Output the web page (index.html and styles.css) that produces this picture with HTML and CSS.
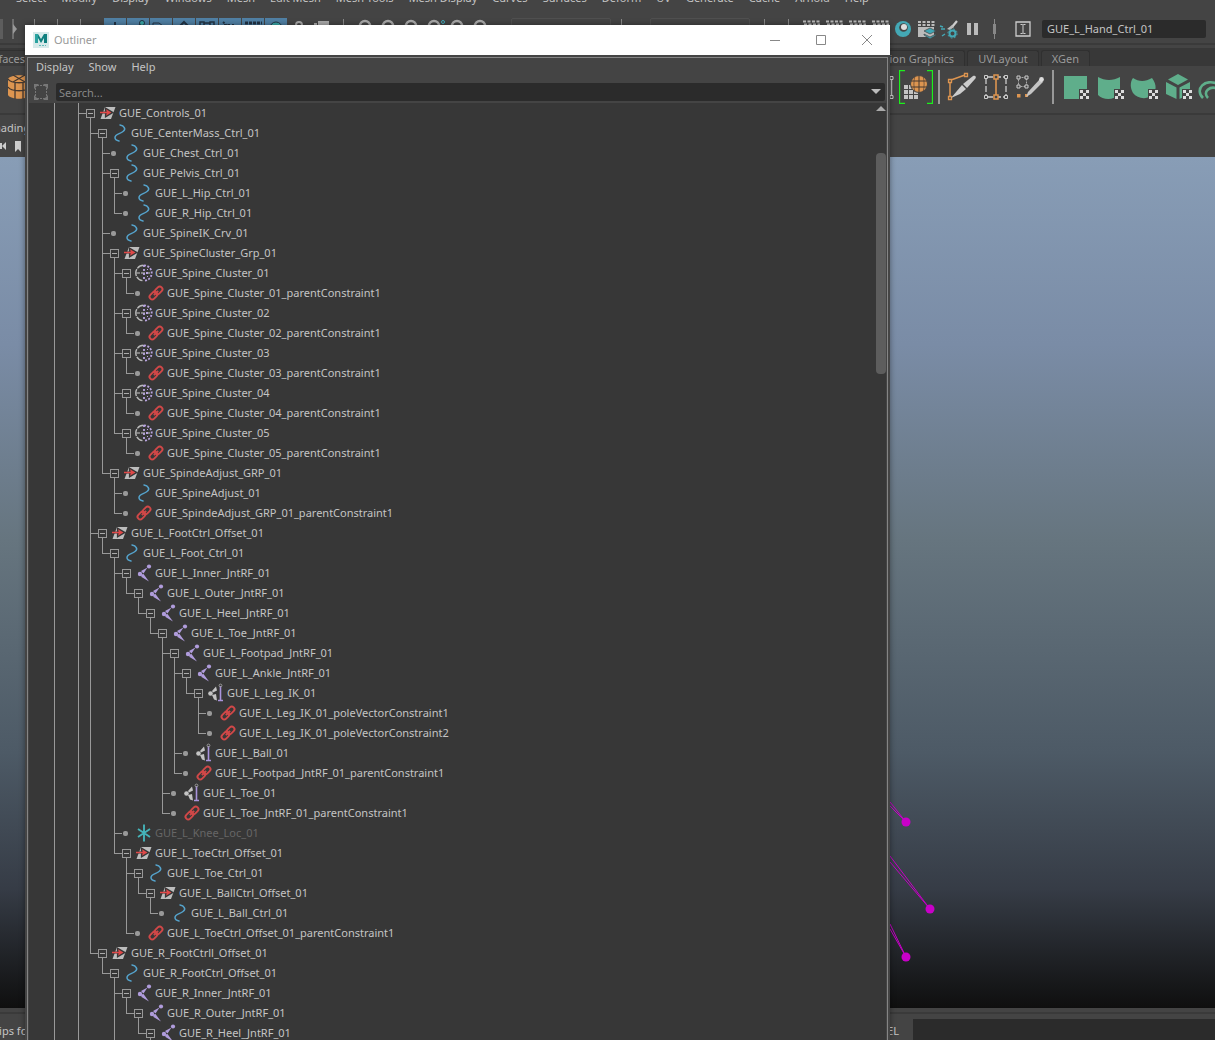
FILE: index.html
```html
<!DOCTYPE html>
<html lang="en">
<head>
<meta charset="utf-8">
<title>Outliner</title>
<link rel="stylesheet" href="styles.css">
</head>
<body>
<svg class="sprite" aria-hidden="true">
  <symbol id="group" viewBox="0 0 24 20"><path d="M10 4h10.500L16 16H5.500z" fill="#bdbdbd"/><path d="M4.500 9.500H11V6l6 3.500-6 3.500V9.500" fill="#e04848" stroke="#373737" stroke-width="2.200"/><path d="M5 9.500h8" stroke="#e04848" stroke-width="1.500"/><path d="M11 6.200l5.500 3.300-5.500 3.300 1-3.300z" fill="#e04848"/></symbol>
  <symbol id="curve" viewBox="0 0 24 20"><path d="M13 2c4 .8 6.500 4 3 6.500C13 11 8 11 8 14.500c0 2 1.800 3 4 3.500" fill="none" stroke="#55a3cc" stroke-width="1.500" stroke-linecap="round"/></symbol>
  <symbol id="cluster" viewBox="-1 0 24 20"><path d="M11.500 2.300a7.700 7.700 0 0 0 0 15.400" fill="none" stroke="#b8b8b8" stroke-width="1.400" stroke-dasharray="7 1"/><path d="M12 2.300a7.700 7.700 0 0 1 0 15.400" fill="none" stroke="#b9a4e0" stroke-width="1.800" stroke-dasharray="2 1.500"/><path d="M4 10h15" stroke="#999" stroke-width="1.500" stroke-dasharray="4 1"/><path d="M12 2v16" stroke="#b9a4e0" stroke-width="1.800" stroke-dasharray="2 2"/><path d="M14 9h2v2h-2zM15 6h1v1h-1zM15 13h1v1h-1z" fill="#b9a4e0"/></symbol>
  <symbol id="link" viewBox="-1 0 24 20"><g transform="rotate(-45 12 10)" fill="none" stroke="#d04848" stroke-width="1.900"><rect x="4" y="7.300" width="8.600" height="5.400" rx="2.700"/><rect x="11.400" y="7.300" width="8.600" height="5.400" rx="2.700"/><path d="M9 10h6"/></g></symbol>
  <symbol id="joint" viewBox="-1 0 24 20"><g fill="#b09cdc"><circle cx="17" cy="3.500" r="2.100"/><circle cx="8" cy="11" r="2.200"/><path d="M15.500 4.500L9 8l2.500 2.500zM9 11.500l2.500-.5 5.500 7.500L9.500 14z"/></g></symbol>
  <symbol id="ik" viewBox="0 0 24 20"><g fill="#c4c4c4"><circle cx="7.500" cy="10.500" r="2.300"/><path d="M13 3.500l1 4-4 2-1-1.500zM9 12l4-1 1 6.500-3-1z"/></g><path d="M17.500 3v14M15 17.500h5" stroke="#a994dc" stroke-width="1.600"/><circle cx="17.500" cy="2.500" r="1.400" fill="none" stroke="#999"/></symbol>
  <symbol id="locator" viewBox="-1 0 24 20"><path d="M12 1.500v17M6 6l12 8M18 6L6 14" stroke="#45b3b8" stroke-width="1.900"/></symbol>
  <symbol id="clapper" viewBox="0 0 22 22"><path d="M3 3.500h17M4 6.500h16" stroke="#bbb" stroke-width="2" stroke-dasharray="3 1.500"/><path d="M4 9h16v10H4z" fill="#bbb"/></symbol>
  <symbol id="magnet" viewBox="0 0 22 22"><path d="M6 14V8a5 5 0 0 1 10 0v6" fill="none" stroke="#aaa" stroke-width="2.500"/></symbol>
  <symbol id="checker" viewBox="0 0 10 10"><path d="M0 0h10v10H0z" fill="#444"/><path d="M1 1h3v3H1zM7 1h3v3H7zM4 4h3v3H4zM1 7h3v3H1zM7 7h3v3H7z" fill="#ddd"/></symbol>
</svg>

<div class="app">
  <nav class="main-menu" aria-label="Main menu">
    <button>Select</button><button>Modify</button><button>Display</button><button>Windows</button><button>Mesh</button><button>Edit Mesh</button><button>Mesh Tools</button><button>Mesh Display</button><button>Curves</button><button>Surfaces</button><button>Deform</button><button>UV</button><button>Generate</button><button>Cache</button><button>Arnold</button><button>Help</button>
  </nav>

  <div class="status-line">
    <span class="combo-end"></span>
    <svg class="handle" viewBox="0 0 6 20"><path d="M1 0v20" stroke="#999"/><path d="M1 5l4 5-4 5z" fill="#999"/></svg>
    <div class="dividers"><i></i><i></i><i></i></div>
    <div class="tools">
      <svg class="tool on" viewBox="0 0 22 22"><path d="M11 4v14" stroke="#234" stroke-width="2"/></svg>
      <svg class="tool on" viewBox="0 0 22 22"><path d="M4 16l10-10" stroke="#234" stroke-width="2"/><circle cx="15" cy="5" r="2.500" fill="#3aa8a8" stroke="#234"/></svg>
      <svg class="tool on" viewBox="0 0 22 22"><path d="M3 5h6l8 6H3z" fill="none" stroke="#234"/></svg>
      <svg class="tool on" viewBox="0 0 22 22"><path d="M11 4l7 7-7 7-7-7z" fill="none" stroke="#234" stroke-width="2"/></svg>
      <svg class="tool on" viewBox="0 0 22 22"><path d="M4 4h4v4H4zM14 4h4v4h-4zM8 5h6" fill="none" stroke="#234" stroke-width="1.500"/></svg>
      <svg class="tool on" viewBox="0 0 22 22"><path d="M4 4l12 10M5 7h12" stroke="#234" stroke-width="2" stroke-dasharray="2 2"/></svg>
      <svg class="tool on" viewBox="0 0 22 22"><path d="M3 5h17" stroke="#234" stroke-width="3" stroke-dasharray="3 1"/></svg>
      <svg class="tool on" viewBox="0 0 22 22"><circle cx="11" cy="10" r="6" fill="#3aa8a8" stroke="#234"/></svg>
      <svg class="tool" viewBox="0 0 22 22"><circle cx="11" cy="7" r="3" fill="none" stroke="#aaa" stroke-width="2"/></svg>
      <svg class="tool" viewBox="0 0 22 22"><path d="M7 3h11v7H7zM3 5h3v2H3z" fill="#aaa"/></svg>
    </div>
    <i class="bar"></i>
    <div class="tools snaps">
      <svg class="tool"><use href="#magnet"/></svg><svg class="tool"><use href="#magnet"/></svg><svg class="tool"><use href="#magnet"/></svg>
      <svg class="tool" viewBox="0 0 22 22"><use href="#magnet"/><circle cx="20" cy="4" r="1.500" fill="none" stroke="#4ab"/></svg>
      <svg class="tool"><use href="#magnet"/></svg><svg class="tool"><use href="#magnet"/></svg>
    </div>
    <span class="slot"></span>
    <i class="bar mid"></i>
    <span class="slot second"></span>
    <div class="render">
      <i class="bar"></i><i class="bar"></i>
      <div class="tools">
        <svg class="tool"><use href="#clapper"/></svg><svg class="tool"><use href="#clapper"/></svg><svg class="tool"><use href="#clapper"/></svg><svg class="tool"><use href="#clapper"/></svg>
        <svg class="tool" viewBox="0 0 22 22"><circle cx="11" cy="11" r="8" fill="#44a8b5"/><circle cx="11.500" cy="9.500" r="4.300" fill="#444"/><circle cx="12" cy="9" r="3" fill="#ddd"/></svg>
        <svg class="tool" viewBox="0 0 22 22"><path d="M3 4h17M3 7h17" stroke="#bbb" stroke-width="2" stroke-dasharray="3 1.500"/><path d="M3 9h16v10H3z" fill="#bbb"/><path d="M9 13l6-3 6 3-6 3zM9 16l6 3 6-3v1l-6 4-6-4z" fill="#3fa6b5" stroke="#444" stroke-width=".7"/></svg>
        <svg class="tool" viewBox="0 0 22 22"><path d="M19 3l-5 6" stroke="#ccc" stroke-width="2.200"/><path d="M14 7l2 2-4 3-3-1z" fill="#bbb"/><path d="M3 11h4M4 18l3-2M2 8l3 1" stroke="#44a8b5" stroke-width="1.500"/><circle cx="14.500" cy="15.500" r="3" fill="none" stroke="#44a8b5" stroke-width="2"/><circle cx="14.500" cy="15.500" r="4.600" fill="none" stroke="#44a8b5" stroke-dasharray="1.800 1.800"/></svg>
        <svg class="tool" viewBox="0 0 22 22"><path d="M6 5h4v12H6zM13 5h4v12h-4z" fill="#bbb"/></svg>
        <svg class="tool" viewBox="0 0 22 22"><path d="M10.500 1v20" stroke="#888"/><path d="M9 6h3v10H9z" fill="#888"/></svg>
      </div>
      <svg class="rename" viewBox="0 0 16 16"><path d="M1 1h14v14H1z" fill="none" stroke="#ccc" stroke-width="1.300"/><path d="M5.500 3.500h2l.5.5.5-.5h2M8 4v8M5.500 12.500h2l.5-.5.5.5h2" fill="none" stroke="#ccc"/></svg>
      <input class="name-field" type="text" aria-label="Object name" value="GUE_L_Hand_Ctrl_01">
    </div>
  </div>

  <div class="shelf-tabs">
    <button>Surfaces</button>
    <div class="tab-group"><button>Motion Graphics</button><button>UVLayout</button><button>XGen</button></div>
  </div>
  <div class="shelf">
    <svg class="shelf-tool" viewBox="0 0 34 34"><path d="M8 9c3-5 19-5 22 0v16c-3 5-19 5-22 0z" fill="#dd9550"/><path d="M8 9c3 5 19 5 22 0M8 17c3 5 19 5 22 0M15 12v17M23 12v17M13 5l12 7M25 5l-12 7" fill="none" stroke="#443830" stroke-width="1.300"/></svg>
    <div class="shelf-right">
      <svg class="shelf-tool" viewBox="0 0 34 34"><path d="M26.500 8v18" stroke="#bbb" stroke-width="1.500"/><path d="M25 6.500h3v3h-3zM25 25.500h3v3h-3z" fill="#444" stroke="#ccc"/></svg>
      <svg class="shelf-tool" viewBox="0 0 34 34"><path d="M6 .5H.5v33H6M28 .5h5.500v33H28" fill="none" stroke="#1cf01c" stroke-width="1.300"/><path d="M5 15h4v4H5zM10 15h4v4h-4zM5 20h4v4H5zM10 20h4v4h-4zM15 20h4v4h-4zM5 25h4v4H5zM10 25h4v4h-4zM15 25h4v4h-4z" fill="#c4c4c4"/><circle cx="20" cy="14" r="8.500" fill="#dd9550" stroke="#444"/><path d="M12 11h16M12 17h16M20 6v16" fill="none" stroke="#443830"/><path d="M16 6c-1.500 5-1.500 11 0 16M24 6c1.500 5 1.500 11 0 16" fill="none" stroke="#443830" stroke-width=".6"/></svg>
      <i class="shelf-bar"></i>
      <svg class="shelf-tool" viewBox="0 0 34 34"><path d="M5 12v14M6 10l14-5" stroke="#dd9550" stroke-width="1.500"/><path d="M3.500 9.500h3v3h-3zM19.500 3.500h3v3h-3zM3.500 26.500h3v3h-3z" fill="#444" stroke="#dd9550" stroke-width="1.300"/><path d="M28 6c2-1 4 1 2 3l-8 9-4-4z" fill="#ccc"/><path d="M17 15l4 4-6 5-9 4z" fill="#ccc"/></svg>
      <svg class="shelf-tool" viewBox="0 0 34 34"><path d="M7 8v18M27 8v18M8 7h18M8 27h18" stroke="#ccc" stroke-width="1.300" stroke-dasharray="6 2"/><path d="M17 8v18" stroke="#dd9550" stroke-width="1.600"/><path d="M5.500 5.500h3v3h-3zM25.500 5.500h3v3h-3zM5.500 25.500h3v3h-3zM25.500 25.500h3v3h-3z" fill="#444" stroke="#ccc"/><path d="M15 5h4v4h-4zM15 25h4v4h-4z" fill="#444" stroke="#dd9550" stroke-width="1.500"/></svg>
      <svg class="shelf-tool" viewBox="0 0 34 34"><path d="M5.500 7.500h8v9h-8z" fill="none" stroke="#aaa" stroke-dasharray="2 1"/><path d="M4 6h3v3H4zM12 6h3v3h-3zM4 15h3v3H4zM12 15h3v3h-3z" fill="#444" stroke="#ccc"/><path d="M4 24h3.500v3.500H4zM12 24h3v3h-3z" fill="#dd9550"/><path d="M27 9l3 3-12 12-5 3 2-5z" fill="#c4c4c4"/><circle cx="28.500" cy="9.500" r="2.400" fill="#ddd"/></svg>
      <i class="shelf-bar"></i>
      <svg class="shelf-tool" viewBox="0 0 34 34"><path d="M5 6h23v23H5z" fill="#5fae8b"/><use href="#checker" x="20" y="19" width="10" height="10"/></svg>
      <svg class="shelf-tool" viewBox="0 0 34 34"><path d="M5 7c7 4 15 4 22 0v17c-7 7-17 6-22 1z" fill="#5fae8b"/><use href="#checker" x="21" y="19" width="10" height="10"/></svg>
      <svg class="shelf-tool" viewBox="0 0 34 34"><path d="M6 8c6 4 12 4 19 0 5 7 5 13-1 18-6 4-14 2-18-3-3-5-3-11 0-15z" fill="#5fae8b"/><use href="#checker" x="21" y="19" width="10" height="10"/></svg>
      <svg class="shelf-tool" viewBox="0 0 34 34"><path d="M17 4l10 5.500-10 5.500L7 9.500zM5 12l10.500 5.500V29L5 24zM29 12l-10.500 5.500V29L29 24z" fill="#5fae8b"/><use href="#checker" x="21" y="19" width="10" height="10"/></svg>
      <svg class="shelf-tool" viewBox="0 0 34 34"><path d="M8 28c-9-9 2-20 15-14M13 28c-6-6 2-13 10-9" fill="none" stroke="#5fae8b" stroke-width="2.600"/></svg>
    </div>
  </div>

  <div class="panel-bar">
    <button class="panel-menu">Shading</button>
    <svg class="panel-icons" viewBox="0 0 24 14"><path d="M-1 4h3v6h-3zM2 7l4-4v8z" fill="#ccc"/><path d="M15 2h6v11l-3-3-3 3z" fill="#ccc"/></svg>
  </div>

  <main class="viewport">
    <svg class="joints" viewBox="0 0 325 240">
      <g fill="none" stroke="#c400c4"><path d="M0 34l16 20M0 38l16 16M0 88l40 53M0 94l40 47M0 156l16 33M0 161l16 28"/></g>
      <g fill="#c800c8"><circle cx="16" cy="54" r="4.500"/><circle cx="40" cy="141" r="4.500"/><circle cx="16" cy="189" r="4.500"/></g>
    </svg>
  </main>

  <footer class="command-line">
    <span>Tips for</span>
    <label for="mel">MEL</label>
    <input id="mel" type="text">
  </footer>
</div>

<section class="outliner" aria-label="Outliner">
  <header class="title-bar">
    <svg class="logo" viewBox="0 0 16 16"><path d="M0 0h16v16H0z" fill="#d7eaea"/><path d="M2 2h3l3 5 3-5h3v9h-3V6l-3 5-3-5v5H2z" fill="#10807f"/><path d="M2 2h3v9H2z" fill="#2aa3a0"/><path d="M6 13.500h7" stroke="#6bb" stroke-dasharray="2 1"/></svg>
    <h1>Outliner</h1>
    <div class="window-buttons">
      <button aria-label="Minimize"><svg viewBox="0 0 12 12"><path d="M1 6.500h10"/></svg></button>
      <button aria-label="Maximize"><svg viewBox="0 0 12 12"><path d="M1.500 1.500h9v9h-9z"/></svg></button>
      <button aria-label="Close"><svg viewBox="0 0 12 12"><path d="M1 1l10 10M11 1L1 11"/></svg></button>
    </div>
  </header>
  <div class="frame">
    <nav class="menu" aria-label="Outliner menu"><button>Display</button><button>Show</button><button>Help</button></nav>
    <div class="search">
      <svg class="fit" viewBox="0 0 16 16"><g fill="#777"><path d="M1 0h5L1 5zM15 0v5l-5-5zM1 16v-5l5 5zM15 16h-5l5-5z"/></g><path d="M2.500 4v8M13.500 4v8M4 1.500h8M4 14.500h8" stroke="#777" stroke-dasharray="2 1"/></svg>
      <div class="search-box">
        <input type="search" placeholder="Search..." aria-label="Search">
        <button aria-label="Search options"><svg viewBox="0 0 10 6"><path d="M0 0h10L5 5z" fill="#bbb"/></svg></button>
      </div>
    </div>
    <div class="body">
      <ul class="tree root"><li class="more"><ul class="tree deep"><li class="more">
        <div class="row"><button class="toggle" aria-label="Collapse"></button><svg><use href="#group"/></svg>GUE_Controls_01</div>
        <ul class="tree">
          <li><div class="row"><button class="toggle" aria-label="Collapse"></button><svg><use href="#curve"/></svg>GUE_CenterMass_Ctrl_01</div>
            <ul class="tree">
              <li><div class="row"><i class="dot"></i><svg><use href="#curve"/></svg>GUE_Chest_Ctrl_01</div></li>
              <li><div class="row"><button class="toggle" aria-label="Collapse"></button><svg><use href="#curve"/></svg>GUE_Pelvis_Ctrl_01</div>
                <ul class="tree">
                  <li><div class="row"><i class="dot"></i><svg><use href="#curve"/></svg>GUE_L_Hip_Ctrl_01</div></li>
                  <li><div class="row"><i class="dot"></i><svg><use href="#curve"/></svg>GUE_R_Hip_Ctrl_01</div></li>
                </ul>
              </li>
              <li><div class="row"><i class="dot"></i><svg><use href="#curve"/></svg>GUE_SpineIK_Crv_01</div></li>
              <li><div class="row"><button class="toggle" aria-label="Collapse"></button><svg><use href="#group"/></svg>GUE_SpineCluster_Grp_01</div>
                <ul class="tree">
                  <li><div class="row"><button class="toggle" aria-label="Collapse"></button><svg><use href="#cluster"/></svg>GUE_Spine_Cluster_01</div>
                    <ul class="tree"><li><div class="row"><i class="dot"></i><svg><use href="#link"/></svg>GUE_Spine_Cluster_01_parentConstraint1</div></li></ul></li>
                  <li><div class="row"><button class="toggle" aria-label="Collapse"></button><svg><use href="#cluster"/></svg>GUE_Spine_Cluster_02</div>
                    <ul class="tree"><li><div class="row"><i class="dot"></i><svg><use href="#link"/></svg>GUE_Spine_Cluster_02_parentConstraint1</div></li></ul></li>
                  <li><div class="row"><button class="toggle" aria-label="Collapse"></button><svg><use href="#cluster"/></svg>GUE_Spine_Cluster_03</div>
                    <ul class="tree"><li><div class="row"><i class="dot"></i><svg><use href="#link"/></svg>GUE_Spine_Cluster_03_parentConstraint1</div></li></ul></li>
                  <li><div class="row"><button class="toggle" aria-label="Collapse"></button><svg><use href="#cluster"/></svg>GUE_Spine_Cluster_04</div>
                    <ul class="tree"><li><div class="row"><i class="dot"></i><svg><use href="#link"/></svg>GUE_Spine_Cluster_04_parentConstraint1</div></li></ul></li>
                  <li><div class="row"><button class="toggle" aria-label="Collapse"></button><svg><use href="#cluster"/></svg>GUE_Spine_Cluster_05</div>
                    <ul class="tree"><li><div class="row"><i class="dot"></i><svg><use href="#link"/></svg>GUE_Spine_Cluster_05_parentConstraint1</div></li></ul></li>
                </ul>
              </li>
              <li><div class="row"><button class="toggle" aria-label="Collapse"></button><svg><use href="#group"/></svg>GUE_SpindeAdjust_GRP_01</div>
                <ul class="tree">
                  <li><div class="row"><i class="dot"></i><svg><use href="#curve"/></svg>GUE_SpineAdjust_01</div></li>
                  <li><div class="row"><i class="dot"></i><svg><use href="#link"/></svg>GUE_SpindeAdjust_GRP_01_parentConstraint1</div></li>
                </ul>
              </li>
            </ul>
          </li>
          <li><div class="row"><button class="toggle" aria-label="Collapse"></button><svg><use href="#group"/></svg>GUE_L_FootCtrl_Offset_01</div>
            <ul class="tree">
              <li><div class="row"><button class="toggle" aria-label="Collapse"></button><svg><use href="#curve"/></svg>GUE_L_Foot_Ctrl_01</div>
                <ul class="tree">
                  <li><div class="row"><button class="toggle" aria-label="Collapse"></button><svg><use href="#joint"/></svg>GUE_L_Inner_JntRF_01</div>
                    <ul class="tree"><li><div class="row"><button class="toggle" aria-label="Collapse"></button><svg><use href="#joint"/></svg>GUE_L_Outer_JntRF_01</div>
                      <ul class="tree"><li><div class="row"><button class="toggle" aria-label="Collapse"></button><svg><use href="#joint"/></svg>GUE_L_Heel_JntRF_01</div>
                        <ul class="tree"><li><div class="row"><button class="toggle" aria-label="Collapse"></button><svg><use href="#joint"/></svg>GUE_L_Toe_JntRF_01</div>
                          <ul class="tree">
                            <li><div class="row"><button class="toggle" aria-label="Collapse"></button><svg><use href="#joint"/></svg>GUE_L_Footpad_JntRF_01</div>
                              <ul class="tree">
                                <li><div class="row"><button class="toggle" aria-label="Collapse"></button><svg><use href="#joint"/></svg>GUE_L_Ankle_JntRF_01</div>
                                  <ul class="tree"><li><div class="row"><button class="toggle" aria-label="Collapse"></button><svg><use href="#ik"/></svg>GUE_L_Leg_IK_01</div>
                                    <ul class="tree">
                                      <li><div class="row"><i class="dot"></i><svg><use href="#link"/></svg>GUE_L_Leg_IK_01_poleVectorConstraint1</div></li>
                                      <li><div class="row"><i class="dot"></i><svg><use href="#link"/></svg>GUE_L_Leg_IK_01_poleVectorConstraint2</div></li>
                                    </ul></li></ul>
                                </li>
                                <li><div class="row"><i class="dot"></i><svg><use href="#ik"/></svg>GUE_L_Ball_01</div></li>
                                <li><div class="row"><i class="dot"></i><svg><use href="#link"/></svg>GUE_L_Footpad_JntRF_01_parentConstraint1</div></li>
                              </ul>
                            </li>
                            <li><div class="row"><i class="dot"></i><svg><use href="#ik"/></svg>GUE_L_Toe_01</div></li>
                            <li><div class="row"><i class="dot"></i><svg><use href="#link"/></svg>GUE_L_Toe_JntRF_01_parentConstraint1</div></li>
                          </ul></li></ul></li></ul></li></ul>
                  </li>
                  <li><div class="row dim"><i class="dot"></i><svg><use href="#locator"/></svg>GUE_L_Knee_Loc_01</div></li>
                  <li><div class="row"><button class="toggle" aria-label="Collapse"></button><svg><use href="#group"/></svg>GUE_L_ToeCtrl_Offset_01</div>
                    <ul class="tree">
                      <li><div class="row"><button class="toggle" aria-label="Collapse"></button><svg><use href="#curve"/></svg>GUE_L_Toe_Ctrl_01</div>
                        <ul class="tree"><li><div class="row"><button class="toggle" aria-label="Collapse"></button><svg><use href="#group"/></svg>GUE_L_BallCtrl_Offset_01</div>
                          <ul class="tree"><li><div class="row"><i class="dot"></i><svg><use href="#curve"/></svg>GUE_L_Ball_Ctrl_01</div></li></ul></li></ul>
                      </li>
                      <li><div class="row"><i class="dot"></i><svg><use href="#link"/></svg>GUE_L_ToeCtrl_Offset_01_parentConstraint1</div></li>
                    </ul>
                  </li>
                </ul>
              </li>
            </ul>
          </li>
          <li><div class="row"><button class="toggle" aria-label="Collapse"></button><svg><use href="#group"/></svg>GUE_R_FootCtrll_Offset_01</div>
            <ul class="tree"><li><div class="row"><button class="toggle" aria-label="Collapse"></button><svg><use href="#curve"/></svg>GUE_R_FootCtrl_Offset_01</div>
              <ul class="tree"><li class="more"><div class="row"><button class="toggle" aria-label="Collapse"></button><svg><use href="#joint"/></svg>GUE_R_Inner_JntRF_01</div>
                <ul class="tree"><li><div class="row"><button class="toggle" aria-label="Collapse"></button><svg><use href="#joint"/></svg>GUE_R_Outer_JntRF_01</div>
                  <ul class="tree"><li><div class="row"><button class="toggle" aria-label="Collapse"></button><svg><use href="#joint"/></svg>GUE_R_Heel_JntRF_01</div></li></ul></li></ul></li></ul></li></ul>
          </li>
        </ul>
      </li></ul></li></ul>
      <div class="scroll"><svg viewBox="0 0 10 6"><path d="M0 5h10L5 0z" fill="#aaa"/></svg><span class="thumb"></span></div>
    </div>
  </div>
</section>
</body>
</html>
```
FILE: styles.css
```css
* { box-sizing: border-box; }

body {
  margin: 0;
  height: 100vh;
  overflow: hidden;
  position: relative;
  background: #444;
  color: #c4c4c4;
  font: 11px/16px "Noto Sans", "Open Sans", sans-serif;
}

button, input {
  font: inherit;
  color: inherit;
  background: none;
  border: 0;
  padding: 0;
  margin: 0;
}

.sprite { display: none; }

/* ---- application behind the floating window ---- */
.app {
  height: 100%;
  display: flex;
  flex-direction: column;
  overflow: hidden;
}

.main-menu {
  flex: none;
  display: flex;
  align-items: flex-start;
  gap: 15px;
  height: 25px;
  margin-top: -10px;
  padding-left: 16px;
  white-space: nowrap;
}

.status-line {
  flex: none;
  display: flex;
  align-items: center;
  height: 28px;
}

.combo-end { width: 3px; height: 20px; background: #5d5d5d; }
.handle { flex: none; width: 6px; height: 20px; margin-left: 9px; }
.dividers { display: flex; gap: 22px; margin: 0 23px 0 16px; }
.dividers i, .bar { flex: none; width: 1px; height: 20px; background: #888; }
.tools { display: flex; gap: 1px; }
.tool { flex: none; width: 22px; height: 22px; }
.tool.on { background: #5080a4; }
.status-line > .bar { margin: 0 10px; }
.slot {
  flex: none;
  width: 100px;
  height: 22px;
  margin-left: 20px;
  border: 1px solid #505050;
  border-radius: 2px;
}
.slot.second { margin-left: 18px; }
.render {
  display: flex;
  align-items: center;
  margin-left: auto;
  padding-right: 9px;
}
.render .bar { margin-right: 23px; }
.render .bar + .bar { margin-right: 11px; }
.rename { flex: none; width: 16px; height: 16px; margin: 0 11px 0 9px; }
.name-field {
  width: 164px;
  height: 18px;
  padding: 0 5px 1px;
  border-radius: 2px;
  background: #2b2b2b;
}

.shelf-tabs {
  flex: none;
  display: flex;
  align-items: flex-end;
  height: 23px;
  padding: 0 125px 0 0;
  margin-left: -30px;
  border-top: 2px solid #3a3a3a;
  background: linear-gradient(#444 3px, #383838 3px);
  color: #9a9a9a;
}
.shelf-tabs button {
  height: 16px;
  padding: 0 10px;
  border: 1px solid #303030;
  border-bottom: 0;
  border-radius: 3px 3px 0 0;
  background: #3b3b3b;
  white-space: nowrap;
}
.tab-group { display: flex; gap: 2px; margin-left: auto; }

.shelf {
  flex: none;
  display: flex;
  align-items: center;
  height: 49px;
  padding-bottom: 5px;
  border-bottom: 2px solid #3a3a3a;
}
.shelf-tool { flex: none; width: 34px; height: 34px; }
.shelf-right {
  display: flex;
  align-items: center;
  margin: 0 -14px 0 auto;
}
.shelf-bar { width: 2px; height: 34px; margin: 0 5px; background: #999; }

.panel-bar { flex: none; height: 42px; padding-top: 5px; }
.panel-menu { display: block; margin-left: -12px; }
.panel-icons { display: block; width: 24px; height: 14px; margin-top: 3px; }

.viewport {
  flex: 1;
  display: flex;
  align-items: flex-end;
  justify-content: flex-end;
  min-height: 0;
  background: linear-gradient(#889db6, #7a8ca6 22%, #66757f 45%, #4d5a66 70%, #363c46 86%, #0f0f0f);
}
.joints { width: 325px; height: 240px; }

.command-line {
  flex: none;
  display: flex;
  align-items: center;
  height: 32px;
  padding-top: 10px;
  border-top: 4px solid #444;
  background: linear-gradient(#3a3a3a 2px, #444 2px);
}
.command-line span { margin-left: -7px; }
.command-line label { margin: 0 14px 0 auto; }
.command-line input { width: 302px; height: 18px; background: #2b2b2b; align-self: stretch; height: auto; margin-top: -3px; }

/* ---- floating outliner window ---- */
.outliner {
  position: absolute;
  top: 25px;
  right: 325px;
  bottom: 0;
  left: 25px;
  display: flex;
  flex-direction: column;
  background: #444;
  box-shadow: 0 0 6px rgba(0, 0, 0, .4);
}

.title-bar {
  flex: none;
  display: flex;
  align-items: center;
  height: 30px;
  padding-left: 8px;
  background: #fff;
  color: #999;
}
.title-bar h1 { margin: 0 0 0 5px; font-size: 11px; font-weight: 400; }
.logo { width: 16px; height: 16px; }
.window-buttons { display: flex; margin-left: auto; }
.window-buttons button { width: 46px; height: 28px; }
.window-buttons svg {
  display: block;
  width: 12px;
  height: 12px;
  margin: auto;
  fill: none;
  stroke: #888;
}

.frame {
  flex: 1;
  display: flex;
  flex-direction: column;
  min-height: 0;
  margin: 2px 2px 0;
  border: 1px solid #858585;
  border-bottom: 0;
}

.menu {
  flex: none;
  display: flex;
  align-items: flex-start;
  gap: 15px;
  height: 25px;
  padding: 1px 8px 0;
}
.menu button { height: 16px; }

.search {
  flex: none;
  display: flex;
  align-items: center;
  height: 18px;
  padding: 0 2px 0 5px;
}
.fit { flex: none; width: 16px; height: 16px; }
.search-box {
  flex: 1;
  display: flex;
  align-items: center;
  height: 18px;
  margin-left: 7px;
  padding: 0 4px 0 3px;
  border-radius: 2px;
  background: #2b2b2b;
}
.search-box input { flex: 1; min-width: 0; padding-top: 1px; outline: 0; }
.search-box input::placeholder { color: #888; opacity: 1; }
.search-box svg { display: block; width: 10px; height: 6px; }

.body {
  flex: 1;
  display: flex;
  min-height: 0;
  margin: 2px 1px 0;
  overflow: hidden;
  background: #373737;
}

.tree { list-style: none; margin: 0 0 0 12px; padding: 0; }
.tree.root { flex: 1; margin-left: 25px; }
.tree.deep { margin-left: 24px; }
.tree li { position: relative; }
.tree li::before {
  content: "";
  position: absolute;
  top: 0;
  left: 0;
  width: 1px;
  height: 100%;
  background: #999;
}
.tree li:last-child::before { height: 10px; }
.tree li.more::before { height: 100vh; }

.row {
  display: flex;
  align-items: center;
  height: 20px;
  white-space: nowrap;
}
.row::before { content: ""; width: 8px; height: 1px; background: #999; }
.row.dim { color: #666; }
.row svg { flex: none; width: 24px; height: 20px; }

.toggle {
  position: relative;
  width: 9px;
  height: 9px;
  border: 1px solid #999;
}
.toggle::before {
  content: "";
  position: absolute;
  top: 3px;
  left: 1px;
  width: 5px;
  height: 1px;
  background: #aaa;
}
.toggle::after {
  content: "";
  position: absolute;
  top: 8px;
  left: 3px;
  width: 1px;
  height: 6px;
  background: #999;
}
.dot {
  width: 5px;
  height: 5px;
  margin: 0 3px 0 1px;
  border-radius: 2px;
  background: #999;
}

.scroll { flex: none; width: 10px; padding-top: 3px; }
.scroll svg { display: block; width: 10px; height: 6px; }
.thumb {
  display: block;
  height: 221px;
  margin-top: 41px;
  border-radius: 4px;
  background: #5d5d5d;
}
```
